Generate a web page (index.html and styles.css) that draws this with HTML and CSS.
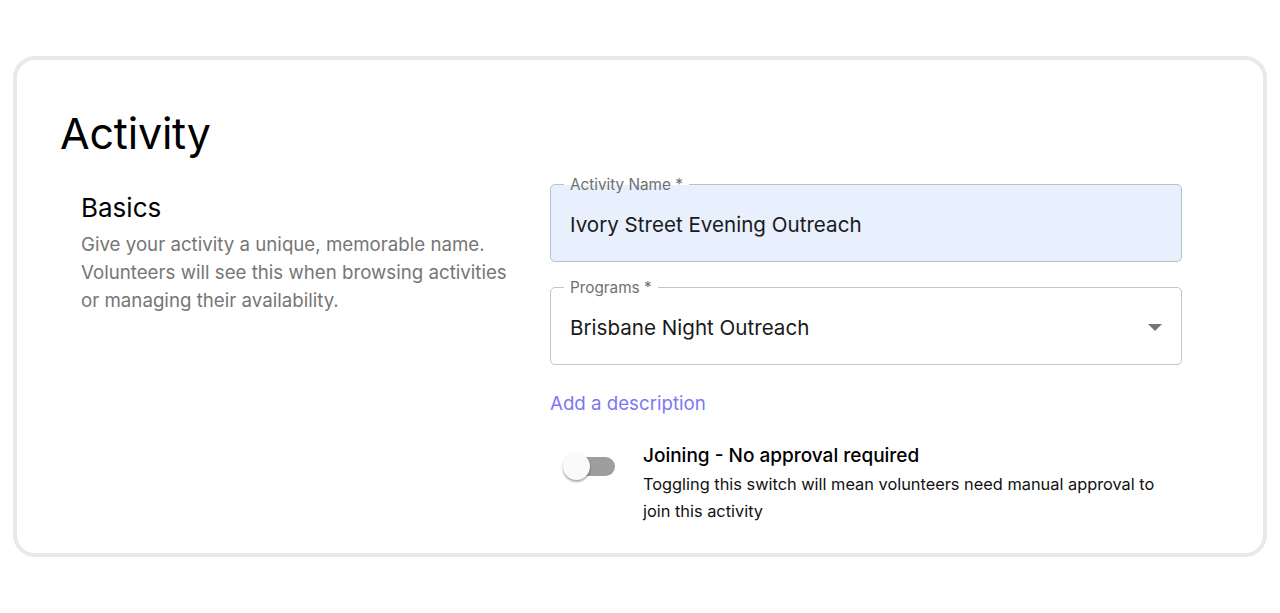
FILE: index.html
```html
<!DOCTYPE html>
<html>
<head>
<meta charset="utf-8">
<link rel="stylesheet" href="styles.css">
</head>
<body>
<div class="card">
  <h1 class="title">Activity</h1>
  <div class="section">
    <div class="intro">
      <h2 class="intro-title">Basics</h2>
      <p class="intro-text">Give your activity a unique, memorable name. Volunteers will see this when browsing activities or managing their availability.</p>
    </div>
    <div class="form">
      <div class="field filled">
        <span class="label">Activity Name *</span>
        <span class="value">Ivory Street Evening Outreach</span>
      </div>
      <div class="field">
        <span class="label">Programs *</span>
        <span class="value">Brisbane Night Outreach</span>
        <svg class="arrow" width="14" height="7" viewBox="0 0 14 7"><path d="M0 0 L14 0 L7 7 Z" fill="#757575"/></svg>
      </div>
      <a class="link">Add a description</a>
      <div class="toggle-row">
        <div class="switch"><span class="track"></span><span class="thumb"></span></div>
        <div class="toggle-text">
          <div class="toggle-title">Joining - No approval required</div>
          <div class="toggle-desc">Toggling this switch will mean volunteers need manual approval to join this activity</div>
        </div>
      </div>
    </div>
  </div>
</div>
</body>
</html>
```

FILE: styles.css
```css
* { box-sizing: border-box; }
body {
  margin: 0;
  background: #fff;
  font-family: Inter, "Noto Sans", sans-serif;
  color: #000;
}
.card {
  margin: 56px 13px 0;
  height: 501px;
  border: 4px solid #e9e9e9;
  border-radius: 22px;
  padding: 43px 81px 0 43px;
}
.title {
  margin: 0;
  font-size: 43px;
  font-weight: 400;
  line-height: 60px;
  letter-spacing: -0.2px;
}
.section {
  display: grid;
  grid-template-columns: 469px 1fr;
  padding-left: 21px;
  margin-top: 21px;
}
.intro-title {
  margin: 9px 0 0;
  font-size: 26px;
  font-weight: 400;
  line-height: 30px;
}
.intro-text {
  margin: 8px 0 0;
  font-size: 18.7px;
  line-height: 28px;
  color: #767676;
  max-width: 440px;
}
.form {
  display: flex;
  flex-direction: column;
}
.field {
  position: relative;
  height: 78px;
  border: 1px solid #c4c4c4;
  border-radius: 5px;
  display: flex;
  align-items: center;
  padding: 2px 19px 0;
  margin-bottom: 25px;
}
.field.filled {
  background: #e8f0fe;
  border-color: #b9c1cd;
}
.label {
  position: absolute;
  top: -10px;
  left: 13px;
  padding: 0 6px;
  font-size: 15.3px;
  line-height: 20px;
  color: #707070;
  background: #fff;
}
.field.filled .label {
  background: linear-gradient(#fff 50%, #e8f0fe 50%);
}
.value {
  font-size: 20.6px;
  color: #1a1a1a;
}
.arrow {
  position: absolute;
  right: 19px;
  top: 36px;
}
.link {
  font-size: 18.7px;
  line-height: 28px;
  color: #7b78f2;
}
.toggle-row {
  display: flex;
  margin-top: 24px;
}
.switch {
  position: relative;
  width: 52px;
  height: 30px;
  margin: 5px 28px 0 13px;
  flex: none;
}
.track {
  position: absolute;
  left: 6px;
  top: 10px;
  width: 46px;
  height: 19px;
  border-radius: 10px;
  background: #9e9e9e;
}
.thumb {
  position: absolute;
  left: 0;
  top: 6px;
  width: 27px;
  height: 27px;
  border-radius: 50%;
  background: #fafafa;
  box-shadow: 0 2px 2px rgba(0,0,0,0.25), 0 1px 3px rgba(0,0,0,0.15);
}
.toggle-title {
  font-size: 19px;
  font-weight: 500;
  line-height: 24px;
  margin-top: 2px;
}
.toggle-desc {
  font-size: 16.35px;
  line-height: 27px;
  color: #111;
  max-width: 530px;
  margin-top: 3px;
}
```
